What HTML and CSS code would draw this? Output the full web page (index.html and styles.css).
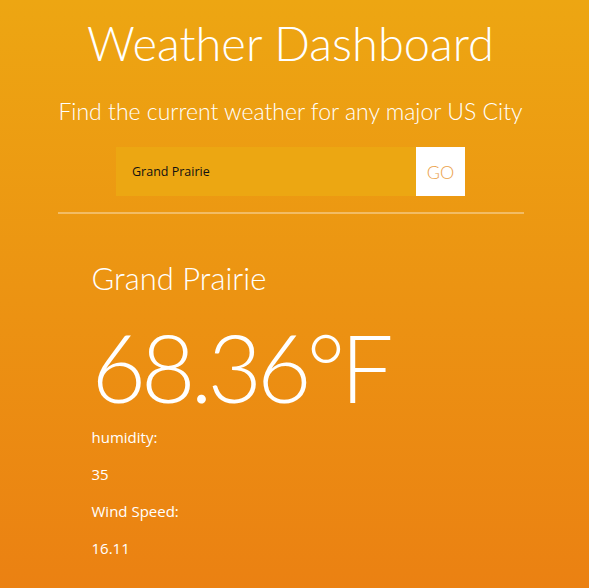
FILE: index.html
```html
<!DOCTYPE html>
<html>
<head>
<meta charset="utf-8">
<link rel="stylesheet" href="styles.css">
</head>
<body>
<div class="page">
  <header class="top">
    <h1 class="title">Weather Dashboard</h1>
    <p class="subtitle">Find the current weather for any major US City</p>
    <form class="search">
      <input class="search-input" type="text" value="Grand Prairie">
      <button class="search-btn" type="button">GO</button>
    </form>
    <hr class="divider">
  </header>
  <section class="result">
    <h2 class="city">Grand Prairie</h2>
    <div class="temp">68.36°F</div>
    <div class="stats">
      <p class="label">humidity:</p>
      <p class="value">35</p>
      <p class="label">Wind Speed:</p>
      <p class="value">16.11</p>
    </div>
  </section>
</div>
</body>
</html>
```
FILE: styles.css
```css
html, body {
  margin: 0;
  padding: 0;
  height: 100%;
}
body {
  background: linear-gradient(to bottom, #eda612 0%, #eb8112 100%);
  color: #fff;
  font-family: "Open Sans", "Segoe UI", sans-serif;
  overflow: hidden;
}
.page {
  width: 466px;
  margin: 0 auto;
  position: relative;
  left: -4px;
}
.top {
  display: flex;
  flex-direction: column;
  align-items: center;
}
.title {
  margin: 13px 0 0;
  font-family: "Lato", sans-serif;
  font-weight: 300;
  font-size: 47px;
  line-height: 60px;
  white-space: nowrap;
}
.subtitle {
  margin: 23px 0 0;
  font-family: "Lato", sans-serif;
  font-weight: 300;
  font-size: 23px;
  line-height: 30px;
  white-space: nowrap;
}
.search {
  display: flex;
  margin-top: 21px;
}
.search-input {
  width: 300px;
  height: 49px;
  box-sizing: border-box;
  border: none;
  background: #eca712;
  padding: 0 16px;
  font-family: "Open Sans", sans-serif;
  font-size: 12.5px;
  color: #111;
  outline: none;
}
.search-btn {
  width: 49px;
  height: 49px;
  border: none;
  background: #fff;
  color: #eba24a;
  font-family: "Lato", sans-serif;
  font-weight: 300;
  font-size: 18px;
  padding: 0;
}
.divider {
  width: 100%;
  margin: 16px 0 0;
  border: none;
  height: 2px;
  background: rgba(255, 255, 255, 0.35);
}
.result {
  padding-left: 34px;
  padding-top: 44px;
}
.city {
  margin: 0;
  font-family: "Lato", sans-serif;
  font-weight: 300;
  font-size: 31px;
  line-height: 40px;
}
.temp {
  margin-top: 24px;
  margin-left: 0;
  font-family: "Lato", sans-serif;
  font-weight: 300;
  font-size: 94px;
  letter-spacing: -5px;
  line-height: 90px;
}
.stats {
  margin-top: 7px;
}
.label, .value {
  margin: 0;
  font-size: 15px;
  line-height: 37px;
}
```
